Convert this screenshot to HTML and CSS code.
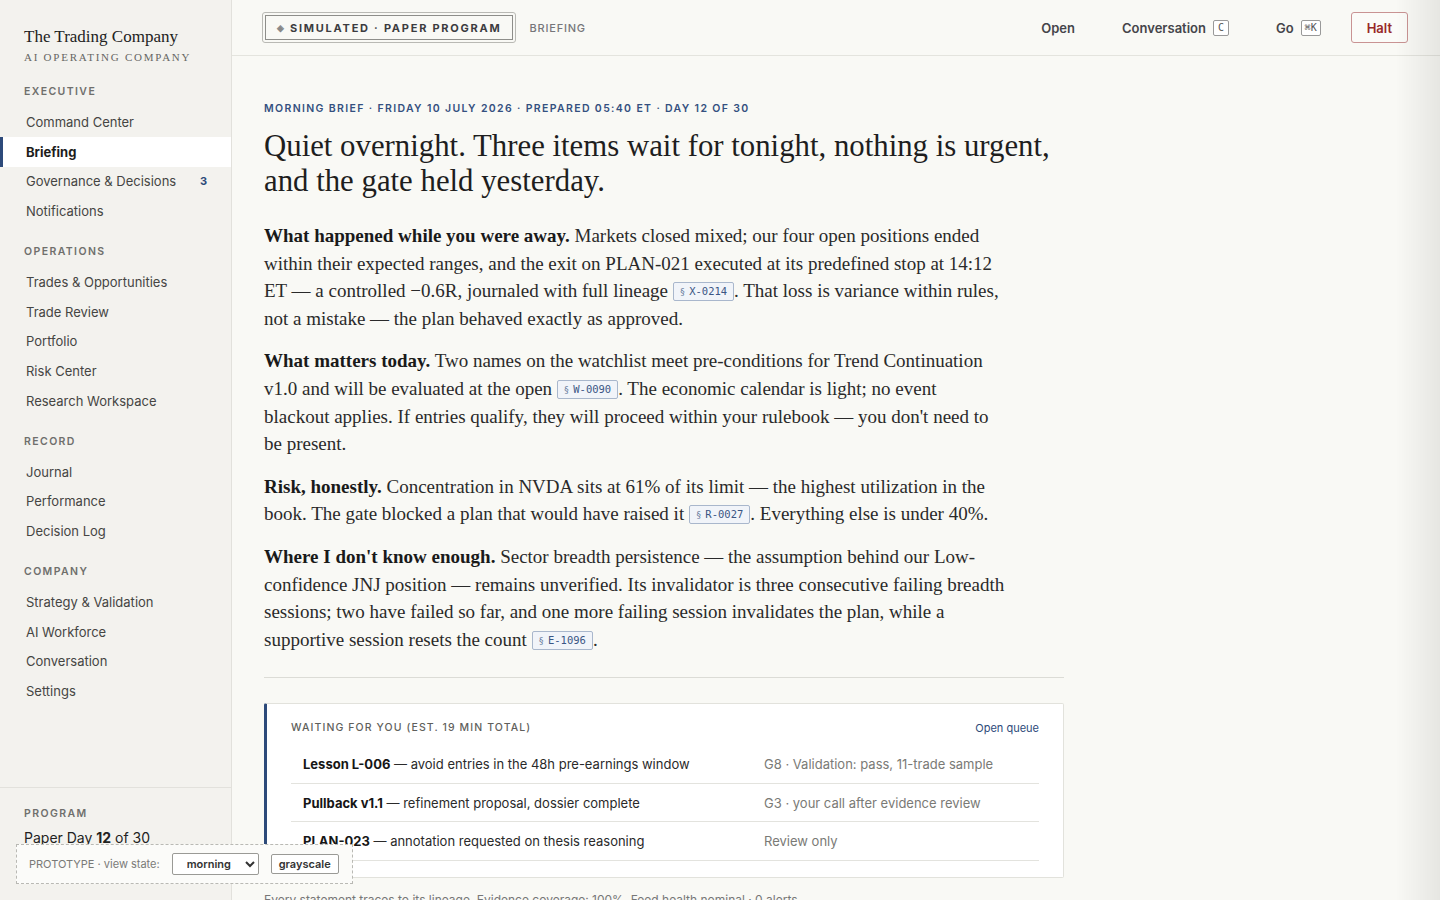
FILE: index.html
```html
<!DOCTYPE html>
<html lang="en">
<head>
<meta charset="utf-8">
<title>Briefing — The Trading Company</title>
<link rel="stylesheet" href="styles.css">
</head>
<body>
<div class="app">
  <aside class="sidebar">
    <div class="brand">
      <div class="brand-name">The Trading Company</div>
      <div class="brand-sub">AI Operating Company</div>
    </div>
    <nav class="nav">
      <div class="nav-group">
        <div class="nav-head">Executive</div>
        <a class="nav-item">Command Center</a>
        <a class="nav-item active">Briefing</a>
        <a class="nav-item">Governance &amp; Decisions <span class="count">3</span></a>
        <a class="nav-item">Notifications</a>
      </div>
      <div class="nav-group">
        <div class="nav-head">Operations</div>
        <a class="nav-item">Trades &amp; Opportunities</a>
        <a class="nav-item">Trade Review</a>
        <a class="nav-item">Portfolio</a>
        <a class="nav-item">Risk Center</a>
        <a class="nav-item">Research Workspace</a>
      </div>
      <div class="nav-group">
        <div class="nav-head">Record</div>
        <a class="nav-item">Journal</a>
        <a class="nav-item">Performance</a>
        <a class="nav-item">Decision Log</a>
      </div>
      <div class="nav-group">
        <div class="nav-head">Company</div>
        <a class="nav-item">Strategy &amp; Validation</a>
        <a class="nav-item">AI Workforce</a>
        <a class="nav-item">Conversation</a>
        <a class="nav-item">Settings</a>
      </div>
    </nav>
    <div class="program">
      <div class="nav-head">Program</div>
      <div class="program-day">Paper Day <b>12</b> of 30</div>
    </div>
  </aside>

  <div class="main">
    <header class="topbar">
      <div class="top-left">
        <div class="sim-badge"><span class="sim-inner"><span class="sim-icon">◈</span>SIMULATED · PAPER PROGRAM</span></div>
        <span class="crumb">BRIEFING</span>
      </div>
      <div class="top-actions">
        <a class="top-link">Open</a>
        <a class="top-link">Conversation <kbd>C</kbd></a>
        <a class="top-link">Go <kbd>⌘K</kbd></a>
        <button class="halt">Halt</button>
      </div>
    </header>

    <main class="content">
      <div class="eyebrow">MORNING BRIEF · FRIDAY 10 JULY 2026 · PREPARED 05:40 ET · DAY 12 OF 30</div>
      <h1 class="headline">Quiet overnight. Three items wait for tonight, nothing is urgent, and the gate held yesterday.</h1>

      <div class="brief">
        <p><b>What happened while you were away.</b> Markets closed mixed; our four open positions ended within their expected ranges, and the exit on PLAN-021 executed at its predefined stop at 14:12 ET — a controlled −0.6R, journaled with full lineage <span class="ref"><span class="sect">§</span>X-0214</span>. That loss is variance within rules, not a mistake — the plan behaved exactly as approved.</p>
        <p><b>What matters today.</b> Two names on the watchlist meet pre-conditions for Trend Continuation v1.0 and will be evaluated at the open <span class="ref"><span class="sect">§</span>W-0090</span>. The economic calendar is light; no event blackout applies. If entries qualify, they will proceed within your rulebook — you don't need to be present.</p>
        <p><b>Risk, honestly.</b> Concentration in NVDA sits at 61% of its limit — the highest utilization in the book. The gate blocked a plan that would have raised it <span class="ref"><span class="sect">§</span>R-0027</span>. Everything else is under 40%.</p>
        <p><b>Where I don't know enough.</b> Sector breadth persistence — the assumption behind our Low-confidence JNJ position — remains unverified. Its invalidator is three consecutive failing breadth sessions; two have failed so far, and one more failing session invalidates the plan, while a supportive session resets the count <span class="ref"><span class="sect">§</span>E-1096</span>.</p>
      </div>

      <hr class="rule">

      <section class="waiting">
        <div class="waiting-head">
          <span class="waiting-title">WAITING FOR YOU (EST. 19 MIN TOTAL)</span>
          <a class="waiting-link">Open queue</a>
        </div>
        <div class="wrow">
          <div class="wmain"><b>Lesson L-006</b> — avoid entries in the 48h pre-earnings window</div>
          <div class="wmeta">G8 · Validation: pass, 11-trade sample</div>
        </div>
        <div class="wrow">
          <div class="wmain"><b>Pullback v1.1</b> — refinement proposal, dossier complete</div>
          <div class="wmeta">G3 · your call after evidence review</div>
        </div>
        <div class="wrow">
          <div class="wmain"><b>PLAN-023</b> — annotation requested on thesis reasoning</div>
          <div class="wmeta">Review only</div>
        </div>
      </section>

      <p class="footnote">Every statement traces to its lineage. Evidence coverage: 100%. Feed health nominal · 0 alerts.</p>
    </main>
  </div>
</div>

<div class="proto">
  <span class="proto-label">PROTOTYPE · view state:</span>
  <select class="proto-select">
    <option>morning</option>
    <option>evening</option>
  </select>
  <button class="proto-btn">grayscale</button>
</div>
<div class="edge-shadow"></div>
</body>
</html>
```

FILE: styles.css
```css
* { box-sizing: border-box; }
html, body { margin: 0; padding: 0; }
body {
  font-family: Inter, "Liberation Sans", sans-serif;
  color: #222;
  background: #f9f9f5;
  overflow: hidden;
}
a { color: inherit; text-decoration: none; cursor: pointer; }

.app { display: flex; height: 100vh; }

/* Sidebar */
.sidebar {
  width: 232px;
  flex: 0 0 232px;
  background: #f3f2ee;
  border-right: 1px solid #e2e1dc;
  display: flex;
  flex-direction: column;
  height: 100vh;
}
.brand { padding: 27px 24px 0; }
.brand-name {
  font-family: "Liberation Serif", serif;
  font-size: 17px;
  line-height: 20px;
  color: #222;
}
.brand-sub {
  font-family: "Liberation Serif", serif;
  font-size: 11px;
  line-height: 14px;
  letter-spacing: 1.75px;
  color: #666663;
  font-weight: 400;
  text-transform: uppercase;
  margin-top: 3px;
}
.nav { flex: 1; padding-top: 3px; }
.nav-group { margin-top: 18px; }
.nav-group + .nav-group { margin-top: 19px; }
.nav-head {
  padding: 0 24px;
  font-size: 10.5px;
  line-height: 14px;
  letter-spacing: 1.4px;
  font-weight: 600;
  color: #6f6f6c;
  text-transform: uppercase;
  margin-bottom: 8px;
}
.nav-item {
  display: flex;
  align-items: center;
  justify-content: space-between;
  height: 29.75px;
  padding: 0 24px 0 23px;
  font-size: 13px;
  color: #454543;
  border-left: 3px solid transparent;
}
.nav-item.active {
  background: #fff;
  border-left-color: #2d4a7a;
  font-weight: 700;
  color: #1d1d1b;
}
.count { font-size: 11px; font-weight: 700; color: #2d4a7a; }

.program {
  border-top: 1px solid #e2e1dc;
  padding: 19px 24px 52px;
}
.program .nav-head { padding: 0; margin-bottom: 7px; }
.program-day { font-size: 14px; line-height: 20px; color: #222; }

/* Main */
.main { flex: 1; min-width: 0; display: flex; flex-direction: column; }
.topbar {
  height: 56px;
  flex: 0 0 56px;
  border-bottom: 1px solid #e4e4de;
  display: flex;
  align-items: center;
  justify-content: space-between;
  padding: 0 32px 0 30px;
}
.top-left { display: flex; align-items: center; gap: 13px; }
.sim-badge {
  border: 1px solid #b9b9b4;
  border-radius: 3px;
  padding: 2px;
  height: 31px;
  display: flex;
}
.sim-inner {
  border: 1px solid #8e8e8a;
  display: flex;
  align-items: center;
  padding: 0 11px 0 11px;
  font-size: 11px;
  font-weight: 700;
  letter-spacing: 1.75px;
  color: #3c3c3f;
}
.sim-icon { font-size: 9px; color: #888; margin-right: 6px; letter-spacing: 0; }
.crumb { font-size: 11px; letter-spacing: 0.8px; color: #76767a; font-weight: 500; }

.top-actions { display: flex; align-items: center; gap: 47px; }
.top-link {
  font-size: 13px;
  font-weight: 600;
  color: #45454a;
  display: flex;
  align-items: center;
  gap: 7px;
}
kbd {
  font-family: "DejaVu Sans Mono", monospace;
  font-size: 10px;
  line-height: 14px;
  min-width: 16px;
  text-align: center;
  border: 1px solid #999;
  border-radius: 2px;
  padding: 0 3px;
  color: #555;
  background: #fff;
  font-weight: 400;
}
.halt {
  margin-left: -17px;
  height: 31px;
  padding: 0 15px;
  border: 1px solid #c99393;
  border-radius: 3px;
  background: #fbfbf8;
  color: #982828;
  font-family: Inter, sans-serif;
  font-size: 13px;
  font-weight: 600;
}

.content { padding: 46px 32px 0; }
.eyebrow {
  font-size: 10.5px;
  line-height: 14px;
  letter-spacing: 1.35px;
  font-weight: 600;
  color: #34507f;
}
.headline {
  margin: 13px 0 0;
  font-family: "Liberation Serif", serif;
  font-weight: 400;
  font-size: 30.8px;
  line-height: 35px;
  color: #1e1e1e;
  max-width: 800px;
}
.brief { margin-top: 23px; max-width: 742px; }
.brief p {
  margin: 0 0 15px;
  font-family: "Liberation Serif", serif;
  font-size: 19px;
  line-height: 27.6px;
  color: #2a2a2a;
}
.brief p:last-child { margin-bottom: 0; }
.brief b { color: #1a1a1a; }
.ref {
  display: inline-block;
  font-family: "DejaVu Sans Mono", monospace;
  font-size: 10.5px;
  line-height: 16px;
  padding: 0 6px;
  border: 1px solid #a9b7cc;
  border-radius: 2px;
  background: #f1f4f9;
  color: #3b5684;
  vertical-align: 2px;
}
.sect { margin-right: 4px; font-size: 9px; color: #6b7fa0; }

.rule {
  border: 0;
  border-top: 1px solid #dcdcd6;
  margin: 24px 0 25px;
  width: 800px;
}

.waiting {
  width: 800px;
  background: #fff;
  border: 1px solid #e2e2dc;
  border-left: 3px solid #2d4a7a;
  border-radius: 2px;
  padding: 17px 24px 16px;
}
.waiting-head {
  display: flex;
  justify-content: space-between;
  align-items: center;
  line-height: 14px;
  margin-bottom: 10px;
}
.waiting-title { font-size: 10.5px; letter-spacing: 1.1px; color: #5f5f5c; font-weight: 500; }
.waiting-link { font-size: 11px; color: #2d4a7a; }
.wrow {
  display: grid;
  grid-template-columns: 473px 1fr;
  align-items: center;
  height: 38.5px;
  border-bottom: 1px solid #e3e3de;
  font-size: 13px;
}
.wmain { padding-left: 12px; color: #2a2a2a; }
.wmain b { color: #161616; font-weight: 700; }
.wmeta { color: #7a7a76; }

.footnote {
  margin: 14px 0 0;
  font-size: 12px;
  color: #777;
}

/* Prototype control */
.proto {
  position: fixed;
  left: 16px;
  bottom: 16px;
  width: 337px;
  height: 40px;
  border: 1px dashed #b9b9b4;
  background: #fbfbf9;
  display: flex;
  align-items: center;
  padding: 0 12px;
  gap: 12px;
}
.proto-label {
  font-size: 11px;
  letter-spacing: 0;
  color: #7a7a78;
  white-space: nowrap;
  flex-shrink: 0;
}
.proto-select {
  width: 87px;
  flex-shrink: 0;
  height: 22px;
  font-family: Inter, sans-serif;
  font-size: 11px;
  font-weight: 600;
  color: #333;
  border: 1px solid #9a9a96;
  border-radius: 2px;
  background: #fff;
  padding: 0 4px 0 10px;
}
.proto-btn {
  flex-shrink: 0;
  height: 20px;
  padding: 0 7px;
  font-family: Inter, sans-serif;
  font-size: 11px;
  font-weight: 600;
  color: #333;
  border: 1px solid #9a9a96;
  border-radius: 2px;
  background: #fff;
}

.edge-shadow {
  position: fixed;
  top: 0;
  right: 0;
  width: 44px;
  height: 100vh;
  pointer-events: none;
  background: linear-gradient(to right, rgba(0,0,0,0), rgba(0,0,0,0.075));
}
```
